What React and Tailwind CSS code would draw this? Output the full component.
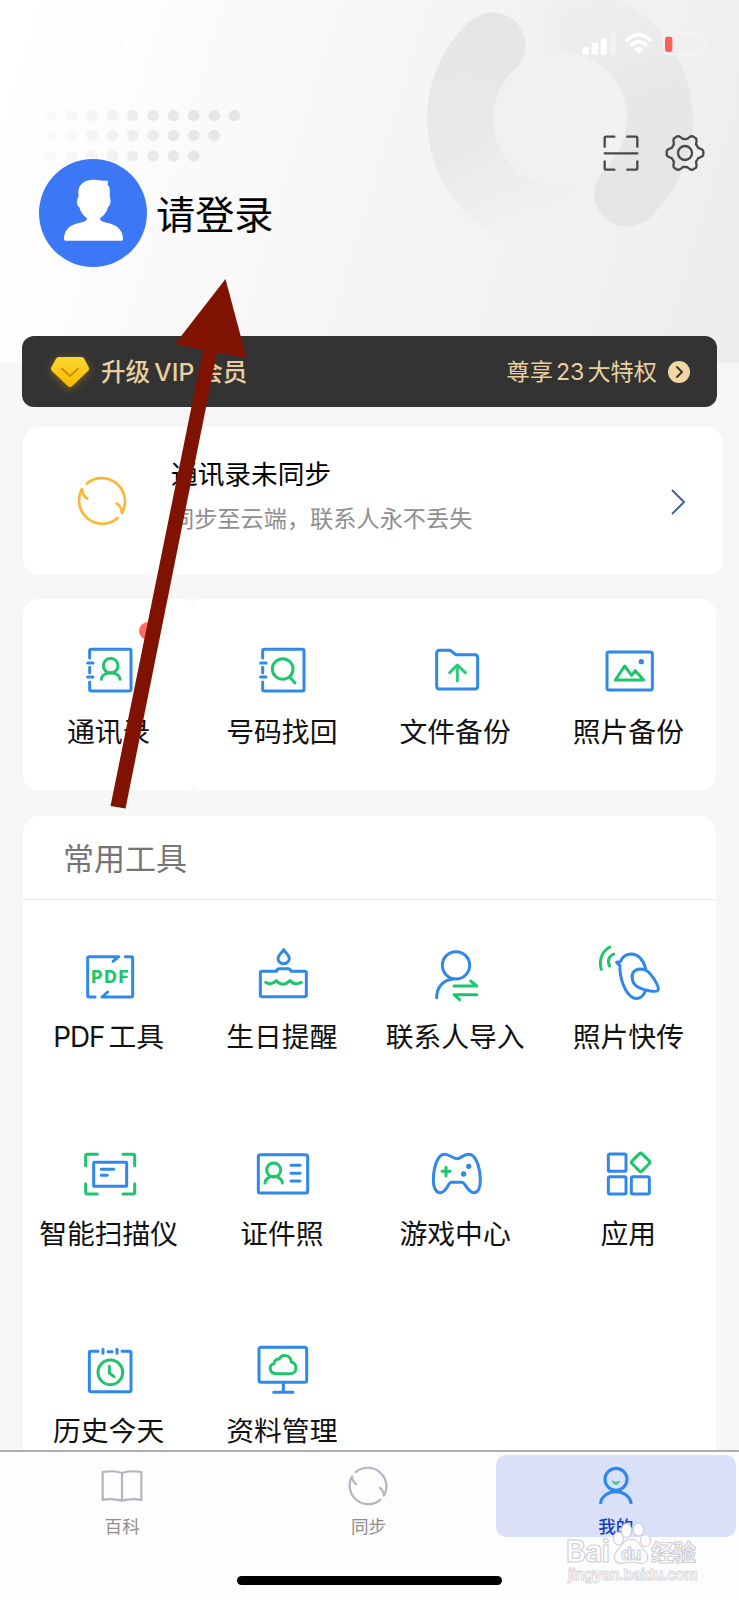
import React from "react";

const BLUE = "#2f88ea";
const GREEN = "#1fc46c";

// Every icon is drawn around its own centre, three units to a pixel.
function Icon({ size = 72, children, stroke = 9, className = "" }) {
  const half = size * 1.5;
  return (
    <svg
      width={size}
      height={size}
      viewBox={`${-half} ${-half} ${half * 2} ${half * 2}`}
      fill="none"
      stroke={BLUE}
      strokeWidth={stroke}
      strokeLinecap="round"
      strokeLinejoin="round"
      className={`shrink-0 ${className}`}
    >
      {children}
    </svg>
  );
}

const Notebook = () => (
  <>
    <path d="M-61 -36V-57q0-5 5-5H58q5 0 5 5V58q0 5-5 5H-56q-5 0-5-5V36M-61 -8V8" />
    <path d="M-67 -21H-51M-67 21H-51" />
  </>
);

const ContactsIcon = () => (
  <Icon>
    <Notebook />
    <g stroke={GREEN}>
      <circle cx="2" cy="-13" r="22" />
      <path d="M-26 28a28 20 0 0 1 56 0" />
    </g>
  </Icon>
);

const FindIcon = () => (
  <Icon>
    <Notebook />
    <g stroke={GREEN}>
      <circle cx="-1" cy="-3" r="31" />
      <path d="M20 21L36 39" />
    </g>
  </Icon>
);

const FolderIcon = () => (
  <Icon>
    <path d="M-58 -50q0-9 9-9H-18L0 -46H57q8 0 8 9V49q0 8-8 8H-50q-8 0-8-8z" />
    <path d="M4 33V-15M-19 8L4 -15L28 8" stroke="#2dcc78" />
  </Icon>
);

const PhotoIcon = () => (
  <Icon>
    <rect x="-66" y="-54" width="136" height="114" rx="6" />
    <circle cx="37" cy="-25" r="8" fill={BLUE} stroke="none" />
    <path d="M-41 30L-13 -12L8 16L19 2L44 30Z" stroke={GREEN} />
  </Icon>
);

const PdfIcon = () => (
  <Icon>
    <path d="M-45 63H-62q-5 0-5-5V-53q0-5 5-5H26l-17 14" />
    <path d="M46 -58H63q5 0 5 5V58q0 5-5 5H-24l17-15" />
    <text
      x="-56"
      y="22"
      fontSize="52"
      fontWeight="800"
      textLength="112"
      fill={GREEN}
      stroke="none"
      className="font-['Inter',sans-serif]"
    >
      PDF
    </text>
  </Icon>
);

const CakeIcon = () => (
  <Icon>
    <path d="M2 -79C-4 -68-15 -64-15 -53A17 16 0 0 0 19 -53C19 -64 8 -68 2 -79Z" />
    <path d="M-63 -14H-20q2-8 9-8H15q7 0 9 8H65q5 0 5 5V57q0 5-5 5H-63q-5 0-5-5V-9q0-5 5-5z" />
    <path d="M-52 19Q-36 30-20 14Q0 35 21 14Q37 30 55 19" stroke={GREEN} />
  </Icon>
);

const ImportIcon = () => (
  <Icon>
    <circle cx="0" cy="-32" r="41" />
    <path d="M-10 9C-40 13-58 34-58 65" />
    <path d="M-6 30H62L44 15M62 56H-6L11 71" stroke={GREEN} />
  </Icon>
);

const BirdIcon = () => (
  <Icon>
    <path d="M50 -22C44 -44 30 -65 7 -66C-8 -66-19 -60-26 -43L-37 -41L-27 -31C-29 0-14 55 14 66C32 71 44 60 49 45" />
    <path d="M10 10C6 -10 17 -20 34 -21C54 -21 64 -8 74 7C85 24 90 38 87 43C82 50 48 44 30 35C18 29 12 20 10 10Z" />
    <path d="M-57 -87C-81 -75-91 -48-83 -20M-46 -66C-61 -59-66 -45-58 -30" stroke={GREEN} />
  </Icon>
);

const ScannerIcon = () => (
  <Icon>
    <path
      d="M-73 -22V-51q0-5 5-5H-38M39 -56H69q5 0 5 5V-22M74 32V58q0 5-5 5H39M-38 63H-68q-5 0-5-5V32"
      stroke={GREEN}
    />
    <rect x="-49" y="-32" width="99" height="72" rx="2" />
    <path d="M-26 -11H11M-26 7H-8" />
  </Icon>
);

const IdCardIcon = () => (
  <Icon>
    <rect x="-74" y="-55" width="148" height="115" rx="6" />
    <g stroke={GREEN}>
      <circle cx="-28" cy="-9" r="21" />
      <path d="M-54 30a26 20 0 0 1 52 0" />
    </g>
    <path d="M24 -23H51M24 1H51M24 24H51" />
  </Icon>
);

const GameIcon = () => (
  <Icon>
    <path d="M2 -43C-8 -43-20 -56-34 -56C-58 -56-68 -10-68 22C-68 44-60 59-48 59C-28 59-24 28-14 28H18C28 28 34 59 54 59C66 59 73 44 73 22C73 -10 62 -56 38 -56C24 -56 14 -43 2 -43Z" />
    <path d="M-42 -5H-18M-30 -17V8" stroke={GREEN} />
    <circle cx="38" cy="-20" r="8" fill={BLUE} stroke="none" />
    <circle cx="23" cy="3" r="8" fill={BLUE} stroke="none" />
  </Icon>
);

const AppsIcon = () => (
  <Icon>
    <rect x="-62" y="-57" width="53" height="52" rx="5" />
    <rect x="-62" y="11" width="53" height="52" rx="5" />
    <rect x="7" y="11" width="54" height="52" rx="5" />
    <rect x="14" y="-53" width="42" height="42" rx="6" transform="rotate(45 35 -32)" stroke={GREEN} />
  </Icon>
);

const HistoryIcon = () => (
  <Icon>
    <path d="M-36 -56H-57q-5 0-5 5V60q0 5 5 5H58q5 0 5-5V-51q0-5-5-5H36" />
    <path d="M-21 -62V-50M21 -62V-50M-6 -55H6" />
    <g stroke={GREEN}>
      <circle cx="1" cy="7" r="37" />
      <path d="M-2 -11V9L12 20" />
    </g>
  </Icon>
);

const MonitorIcon = () => (
  <Icon>
    <rect x="-72" y="-68" width="143" height="105" rx="6" />
    <path d="M1 37V66M-28 67H30" />
    <path d="M-20 11C-42 11-44 -14-27 -19C-28 -28-18 -34-11 -33C-4 -49 22 -47 25 -24C44 -20 44 11 22 11Z" stroke={GREEN} />
  </Icon>
);

function SyncArcs({ scale = 1 }) {
  return (
    <g transform={`scale(${scale})`}>
      <path d="M-46 -52A70 70 0 0 1 60 36Q58 16 44 7" />
      <path d="M47 51A70 70 0 0 1-60 -36Q-58 -16-44 -7" />
    </g>
  );
}

// six soft teeth round the hub
const gearPath =
  "M" +
  Array.from({ length: 120 }, (_, i) => {
    const a = (i / 120) * Math.PI * 2;
    const r = 48.5 + 6.5 * Math.max(-1, Math.min(1, 1.5 * Math.cos(6 * a)));
    return `${(r * Math.cos(a)).toFixed(1)} ${(r * Math.sin(a)).toFixed(1)}`;
  }).join("L") +
  "Z";

const quick = [
  { label: "通讯录", icon: ContactsIcon, dot: true },
  { label: "号码找回", icon: FindIcon },
  { label: "文件备份", icon: FolderIcon },
  { label: "照片备份", icon: PhotoIcon },
];

const tools = [
  { latin: "PDF", label: "工具", icon: PdfIcon },
  { label: "生日提醒", icon: CakeIcon },
  { label: "联系人导入", icon: ImportIcon },
  { label: "照片快传", icon: BirdIcon },
  { label: "智能扫描仪", icon: ScannerIcon },
  { label: "证件照", icon: IdCardIcon },
  { label: "游戏中心", icon: GameIcon },
  { label: "应用", icon: AppsIcon },
  { label: "历史今天", icon: HistoryIcon },
  { label: "资料管理", icon: MonitorIcon },
];

function HeaderBackdrop() {
  const rows = [
    { y: 115.5, from: 0, to: 11 },
    { y: 135.5, from: 0, to: 10 },
    { y: 156, from: 1, to: 9 },
  ];
  return (
    <svg className="absolute inset-0" width="739" height="363" viewBox="0 0 739 363" fill="none">
      <defs>
        <linearGradient id="ringLeft" gradientUnits="userSpaceOnUse" x1="480" y1="20" x2="590" y2="240">
          <stop offset="0" stopColor="#e6e6e6" />
          <stop offset="0.45" stopColor="#e9e9e9" />
          <stop offset="0.95" stopColor="#eeeeee" stopOpacity="0" />
        </linearGradient>
        <linearGradient id="ringRight" gradientUnits="userSpaceOnUse" x1="560" y1="0" x2="630" y2="220">
          <stop offset="0" stopColor="#e9e9e9" stopOpacity="0.3" />
          <stop offset="0.5" stopColor="#e7e7e7" />
          <stop offset="1" stopColor="#e5e5e5" />
        </linearGradient>
        <linearGradient id="ringTop" gradientUnits="userSpaceOnUse" x1="500" y1="0" x2="560" y2="0">
          <stop offset="0" stopColor="#e9e9e9" stopOpacity="0" />
          <stop offset="1" stopColor="#e9e9e9" stopOpacity="0.35" />
        </linearGradient>
      </defs>
      <circle cx="560" cy="119" r="68" fill="#f1f1f1" />
      <path d="M510 32.400A100 100 0 0 1 560 19" stroke="url(#ringTop)" strokeWidth="66" />
      <path d="M560 19A100 100 0 0 1 660 119A100 100 0 0 1 627.300 193" stroke="url(#ringRight)" strokeWidth="66" />
      <circle cx="627.300" cy="193.500" r="33" fill="#e5e5e5" />
      <path d="M492.700 45A100 100 0 0 0 460 119A100 100 0 0 0 580 217" stroke="url(#ringLeft)" strokeWidth="66" />
      <circle cx="492.700" cy="45.500" r="33" fill="#e6e6e6" />
      {rows.map((row) =>
        Array.from({ length: row.to - row.from }, (_, i) => {
          const col = row.from + i;
          return (
            <circle
              key={`${row.y}-${col}`}
              cx={31 + col * 20.35}
              cy={row.y}
              r="5.8"
              fill="#e6e6e6"
              opacity={Math.min(1, col * 0.13)}
            />
          );
        })
      )}
    </svg>
  );
}

function StatusIcons() {
  return (
    <svg width="132" height="28" viewBox="0 0 396 84" fill="none">
      <g fill="#fff">
        <rect x="8" y="50" width="19" height="24" rx="4" />
        <rect x="35" y="38" width="19" height="36" rx="4" />
        <rect x="62" y="25" width="19" height="49" rx="4" />
        <rect x="89" y="10" width="19" height="64" rx="4" opacity="0.3" />
        <path d="M176 72L161 57Q176 45 191 57Z" />
      </g>
      <path d="M138 33Q176 -4 214 33M151 47Q176 24 201 47" stroke="#fff" strokeWidth="10" />
      <rect x="251" y="11" width="121" height="62" rx="17" stroke="#f6f6f6" strokeWidth="4" />
      <path d="M380 33q7 8 0 19z" fill="#f8f8f8" />
      <rect x="255" y="20" width="22" height="46" rx="7" fill="#ff5f57" />
    </svg>
  );
}

function Header() {
  return (
    <header className="relative h-[363px] bg-[linear-gradient(107deg,#ffffff_0%,#fcfcfc_20%,#f5f5f5_52%,#ededed_100%)]">
      <HeaderBackdrop />
      <div className="relative flex h-[88px] items-center justify-between pl-[54px] pr-[27px]">
        <span className="text-[28.5px] leading-8 font-semibold text-white">08:21</span>
        <StatusIcons />
      </div>
      <div className="relative flex items-start justify-between pr-[30px] pl-[39px]">
        <div className="mt-[71px] flex items-center gap-[9px]">
          <svg width="108" height="108" viewBox="0 0 324 324">
            <circle cx="162" cy="162" r="162" fill="#3c77f5" />
            <path
              d="M119 112C113 74 138 62 166 62C182 62 192 67 207 65L206 79C214 82 213 102 212 114C217 122 214 142 207 144C203 162 191 172 183 178C182 188 197 190 217 195C242 203 252 222 252 240Q252 245 247 245H80Q75 245 75 240C75 222 84 203 109 195C129 190 145 188 144 178C137 172 125 162 121 144C113 142 112 122 119 112Z"
              fill="#fff"
            />
          </svg>
          <span className="mt-[3px] text-[39.2px] leading-[44px] text-black">请登录</span>
        </div>
        <div className="mt-[41px] flex gap-[16px]">
          <Icon size={48} stroke={7}>
            <path
              d="M-49 -19V-45q0-4 4-4H-20M19 -49H45q4 0 4 4V-19M49 25V46q0 4-4 4H19M-20 50H-45q-4 0-4-4V25M-49 1H49"
              stroke="#4a4a4a"
            />
          </Icon>
          <Icon size={48} stroke={7}>
            <path d={gearPath} stroke="#4a4a4a" />
            <circle r="21" stroke="#4a4a4a" />
          </Icon>
        </div>
      </div>
    </header>
  );
}

function VipBar() {
  return (
    <div className="relative mx-[22px] -mt-[27px] flex h-[71px] items-center rounded-xl bg-[#333] pr-[27px] pl-[24px] text-[#e9cf9f]">
      <svg width="48" height="48" viewBox="-72 -72 144 144" className="drop-shadow-[0_2px_4px_rgba(255,190,0,0.35)]">
        <defs>
          <linearGradient id="gem" x1="0" y1="0" x2="0" y2="1">
            <stop offset="0" stopColor="#fbd62f" />
            <stop offset="1" stopColor="#fcb900" />
          </linearGradient>
        </defs>
        <path d="M-34 -45H35Q40 -45 43 -40L57 -13Q59 -8 55 -4L6 43Q0 48-6 43L-55 -4Q-59 -8-57 -13L-42 -40Q-39 -45-34 -45Z" fill="url(#gem)" />
        <path d="M-24 -10L0 12L24 -10" fill="none" stroke="#c58a00" strokeWidth="5" strokeLinecap="round" />
      </svg>
      <span className="ml-[7px] text-[24.6px] leading-8 font-medium [word-spacing:-2.5px]">升级 VIP 会员</span>
      <span className="ml-auto text-[23.2px] leading-8 [word-spacing:-3.5px]">尊享 23 大特权</span>
      <svg width="22" height="22" viewBox="0 0 22 22" className="ml-[11px]" fill="none">
        <circle cx="11" cy="11" r="11" fill="#f0d6a3" />
        <path d="M9 6L14 11L9 16" stroke="#333" strokeWidth="1.8" strokeLinecap="round" strokeLinejoin="round" />
      </svg>
    </div>
  );
}

function SyncCard() {
  return (
    <div className="mt-[20px] mr-[16px] ml-[23px] flex h-[148px] items-center rounded-2xl bg-white pr-[37px] pl-[43px]">
      <Icon stroke={8}>
        <g stroke="#fbb636">
          <SyncArcs />
        </g>
      </Icon>
      <div className="mb-[9px] ml-[33px] flex flex-col gap-[13px]">
        <span className="text-[26.7px] leading-8 text-black">通讯录未同步</span>
        <span className="text-[23.2px] leading-8 text-[#8f8f8f]">同步至云端，联系人永不丢失</span>
      </div>
      <svg width="16" height="28" viewBox="0 0 16 28" fill="none" className="mt-px ml-auto">
        <path d="M2 2L14 14L2 26" stroke="#41639b" strokeWidth="2" />
      </svg>
    </div>
  );
}

function Label({ latin, children }) {
  return (
    <span className="mr-[2px] text-[27.8px] leading-7 whitespace-nowrap text-[#111]">
      {latin && <span className="mr-[4px] tracking-[-1px]">{latin}</span>}
      {children}
    </span>
  );
}

function QuickCard() {
  return (
    <div className="mt-6 mr-[23px] ml-[23px] grid h-[192px] grid-cols-4 overflow-hidden rounded-2xl bg-[#fafafa]">
      {quick.map(({ label, icon: Glyph, dot }) => (
        <div
          key={label}
          className={`relative flex flex-col items-center gap-[12px] bg-white pt-[35px] ${dot ? "rounded-r-xl" : ""}`}
        >
          <Glyph />
          <Label>{label}</Label>
          {dot && <i className="absolute top-[23px] left-[116px] size-[18px] rounded-full bg-[#ff6d61]" />}
        </div>
      ))}
    </div>
  );
}

function ToolsCard() {
  return (
    <section className="mx-[23px] mt-[25px] h-[634px] overflow-hidden rounded-t-2xl bg-white">
      <h2 className="h-[84px] border-b border-[#e9e9e9] pt-[27px] pl-[40px] text-[31px] leading-8 text-[#757575]">
        常用工具
      </h2>
      <div className="grid auto-rows-[197px] grid-cols-4">
        {tools.map(({ label, latin, icon: Glyph }) => (
          <div key={label} className="flex flex-col items-center gap-[11px] pt-[40px]">
            <Glyph />
            <Label latin={latin}>{label}</Label>
          </div>
        ))}
      </div>
    </section>
  );
}

function TabBar() {
  return (
    <nav className="relative h-[150px] border-t-2 border-[#adadad] bg-[#fdfdfd] pt-[3px]">
      <div className="grid h-[81px] grid-cols-3 text-[17.6px] leading-5 text-[#8e8e8e]">
        <div className="mr-[2px] flex flex-col items-center gap-[7px] pt-[7px]">
          <Icon size={48} stroke={6.500}>
            <path
              d="M0 -39C-15 -45-40 -45-58 -42V42C-40 38-15 40 0 44C15 40 40 38 58 42V-42C40 -45 15 -45 0 -39V44"
              stroke="#b0b5bf"
            />
          </Icon>
          <span>百科</span>
        </div>
        <div className="mr-[2px] flex flex-col items-center gap-[7px] pt-[7px]">
          <Icon size={48} stroke={8}>
            <g stroke="#b0b5bf">
              <SyncArcs scale={0.8} />
            </g>
          </Icon>
          <span>同步</span>
        </div>
        <div className="mr-[3px] ml-[3px] flex flex-col items-center gap-[7px] rounded-[10px] bg-[#d9e0f8] pt-[7px] font-medium text-[#1a3fc4]">
          <Icon size={48} stroke={9.500}>
            <circle cx="0" cy="-20" r="33" />
            <path d="M-46 50A46 39 0 0 1 45 50" />
            <path d="M-11 -14Q0 -8 11 -14Q8 -5 0 -5Q-8 -5-11 -14Z" fill="#35d07f" stroke="#35d07f" strokeWidth="3" />
          </Icon>
          <span>我的</span>
        </div>
      </div>
      <div className="mx-auto mt-[40px] h-[9px] w-[265px] rounded-full bg-black" />
      <Watermark />
    </nav>
  );
}

function Watermark() {
  return (
    <svg
      className="absolute top-[68px] left-[561px]"
      width="144"
      height="70"
      viewBox="0 0 144 70"
      fill="#fdfdfd"
      stroke="#cfcfd6"
      strokeWidth="1.1"
      fontWeight="700"
    >
      <text x="5" y="42" fontSize="30" textLength="44">Bai</text>
      <ellipse cx="57.500" cy="18.500" rx="5" ry="6.500" />
      <ellipse cx="65.500" cy="10.500" rx="5" ry="7" />
      <ellipse cx="77.500" cy="9.500" rx="5" ry="6.500" />
      <ellipse cx="84.500" cy="20.500" rx="5" ry="6" />
      <path d="M70 19C77 19 79 26 84 31C91 39 84 45 77 43C72 42 68 42 63 43C55 45 50 38 56 31C61 26 62 19 70 19Z" />
      <text x="60" y="40" fontSize="17" textLength="20">du</text>
      <text x="90" y="41" fontSize="23" textLength="45">经验</text>
      <text x="7" y="60" fontSize="15" textLength="130" stroke="#dadade" strokeWidth="1">jingyan.baidu.com</text>
    </svg>
  );
}

export default function App() {
  return (
    <div className="relative h-[1600px] w-[739px] overflow-hidden bg-[#f6f6f6] font-['Inter','Noto_Sans_CJK_SC',sans-serif]">
      <Header />
      <VipBar />
      <SyncCard />
      <QuickCard />
      <ToolsCard />
      <TabBar />
      <svg className="absolute top-[270px] left-[100px]" width="160" height="550" viewBox="100 270 160 550">
        <path d="M225.500 279L246.500 358L217 352.500L125.500 808.500L110.500 806L203 350L175 344Z" fill="#7f1200" />
      </svg>
    </div>
  );
}
